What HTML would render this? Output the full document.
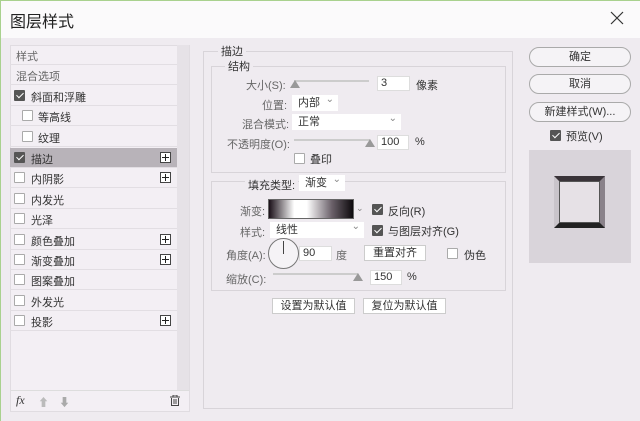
<!DOCTYPE html>
<html><head><meta charset="utf-8"><style>
*{box-sizing:border-box;margin:0;padding:0}
body{width:640px;height:421px;background:#efebf0;font-family:"Liberation Sans","Noto Sans CJK SC",sans-serif;font-size:11px;color:#333;position:relative;overflow:hidden}
.a{position:absolute}
.t{position:absolute;white-space:nowrap;font-size:11px;color:#333}
.g{color:#666}
.cb{position:absolute;width:11px;height:11px;border:1px solid #aaa;background:#fff;border-radius:1px}
.cb.on{background:#555;border-color:#555}
.cb.on:after{content:"";position:absolute;left:3px;top:0px;width:3px;height:6px;border:solid #fff;border-width:0 1.5px 1.5px 0;transform:rotate(45deg)}
.row{position:absolute;left:10px;width:167px;height:20px;border-bottom:1px solid #e2dee3}
.row span{position:absolute;top:3px}
.plus{position:absolute;left:150px;top:4px;width:11px;height:11px;border:1px solid #444;background:#fff}
.plus:before{content:"";position:absolute;left:1px;top:4px;width:7px;height:1px;background:#222}
.plus:after{content:"";position:absolute;left:4px;top:1px;width:1px;height:7px;background:#222}
.inp{position:absolute;background:#fff;border:1px solid #ddd;height:15px;padding-left:3px;line-height:13px}
.sel{position:absolute;background:#fff;height:16px;padding-left:6px;line-height:16px}
.sel:after{content:"⌄";position:absolute;right:4px;top:-3px;color:#888;font-size:10px}
.btn{position:absolute;background:#fff;border:1px solid #ccc;height:16px;text-align:center;line-height:14px}
.rb{position:absolute;left:529px;width:102px;height:20px;border:1px solid #aaa;border-radius:10px;background:#f5f3f6;text-align:center;line-height:18px}
.sl{position:absolute;height:2px;background:#ccc}
.tri{position:absolute;width:0;height:0;border-left:5px solid transparent;border-right:5px solid transparent;border-bottom:8px solid #999}
.box{position:absolute;border:1px solid #d8d4d9}
</style></head><body>
<div class="a" style="left:0;top:0;width:640px;height:38px;background:#fbfafb"></div>
<div class="a" style="left:0;top:0;width:1px;height:421px;background:#a9d18e"></div>
<div class="a" style="left:0;top:0;width:640px;height:1px;background:#a9d18e"></div>
<div class="t" style="left:10px;top:8px;font-size:16px;color:#222">图层样式</div>
<svg class="a" style="left:610px;top:11px" width="14" height="14"><path d="M1 1L13 13M13 1L1 13" stroke="#333" stroke-width="1.2"/></svg>

<div class="a" style="left:10px;top:45px;width:180px;height:367px;background:#f3eff4;border:1px solid #e0dce1"></div>
<div class="a" style="left:177px;top:45px;width:12px;height:345px;background:#e6e2e7"></div>
<div class="row" style="top:45px"><span style="left:6px" class="g">样式</span></div>
<div class="row" style="top:65px"><span style="left:6px" class="g">混合选项</span></div>
<div class="row" style="top:86px"><div class="cb on" style="left:4px;top:4px"></div><span style="left:21px">斜面和浮雕</span></div>
<div class="row" style="top:106px"><div class="cb" style="left:12px;top:4px"></div><span style="left:28px">等高线</span></div>
<div class="row" style="top:127px"><div class="cb" style="left:12px;top:4px"></div><span style="left:28px">纹理</span></div>
<div class="row" style="top:148px;background:#b8b3b9"><div class="cb on" style="left:4px;top:4px"></div><span style="left:21px">描边</span><div class="plus"></div></div>
<div class="row" style="top:168px"><div class="cb" style="left:4px;top:4px"></div><span style="left:21px">内阴影</span><div class="plus"></div></div>
<div class="row" style="top:189px"><div class="cb" style="left:4px;top:4px"></div><span style="left:21px">内发光</span></div>
<div class="row" style="top:209px"><div class="cb" style="left:4px;top:4px"></div><span style="left:21px">光泽</span></div>
<div class="row" style="top:230px"><div class="cb" style="left:4px;top:4px"></div><span style="left:21px">颜色叠加</span><div class="plus"></div></div>
<div class="row" style="top:250px"><div class="cb" style="left:4px;top:4px"></div><span style="left:21px">渐变叠加</span><div class="plus"></div></div>
<div class="row" style="top:270px"><div class="cb" style="left:4px;top:4px"></div><span style="left:21px">图案叠加</span></div>
<div class="row" style="top:291px"><div class="cb" style="left:4px;top:4px"></div><span style="left:21px">外发光</span></div>
<div class="row" style="top:311px"><div class="cb" style="left:4px;top:4px"></div><span style="left:21px">投影</span><div class="plus"></div></div>
<div class="a" style="left:11px;top:390px;width:178px;height:1px;background:#ddd"></div>
<div class="t" style="left:16px;top:393px;font-style:italic;font-family:'Liberation Serif',serif;font-size:12px">fx</div>
<div class="t" style="left:38px;top:394px;color:#bbb">⬆</div>
<div class="t" style="left:59px;top:394px;color:#aaa">⬇</div>
<svg class="a" style="left:170px;top:395px" width="10" height="11"><path d="M0 2H10M3 2V0H7V2M1.5 3V10.5H8.5V3M4 4V9M6 4V9" stroke="#444" fill="none"/></svg>

<div class="box" style="left:203px;top:51px;width:310px;height:358px"></div>
<div class="t" style="left:218px;top:43px;background:#efebf0;padding:0 3px">描边</div>
<div class="box" style="left:211px;top:66px;width:295px;height:107px"></div>
<div class="t" style="left:225px;top:58px;background:#efebf0;padding:0 3px">结构</div>
<div class="t g" style="left:246px;top:77px">大小(S):</div>
<div class="sl" style="left:294px;top:80px;width:75px"></div><div class="tri" style="left:290px;top:80px"></div>
<div class="inp" style="left:377px;top:76px;width:33px">3</div>
<div class="t" style="left:416px;top:77px">像素</div>
<div class="t g" style="left:262px;top:97px">位置:</div>
<div class="sel" style="left:292px;top:95px;width:46px">内部</div>
<div class="t g" style="left:242px;top:116px">混合模式:</div>
<div class="sel" style="left:292px;top:114px;width:109px">正常</div>
<div class="t g" style="left:227px;top:136px">不透明度(O):</div>
<div class="sl" style="left:294px;top:139px;width:76px"></div><div class="tri" style="left:365px;top:139px"></div>
<div class="inp" style="left:377px;top:135px;width:32px">100</div>
<div class="t" style="left:415px;top:136px">%</div>
<div class="cb" style="left:294px;top:153px"></div>
<div class="t" style="left:310px;top:151px">叠印</div>

<div class="box" style="left:211px;top:181px;width:295px;height:110px"></div>
<div class="t" style="left:245px;top:177px;background:#efebf0;padding:0 3px">填充类型:</div>
<div class="sel" style="left:299px;top:175px;width:46px">渐变</div>
<div class="t g" style="left:240px;top:203px">渐变:</div>
<div class="a" style="left:268px;top:199px;width:86px;height:20px;border:1px solid #666;background:linear-gradient(90deg,#1a1018,#fff 30%,#fff 45%,#6a6069 75%,#0d0a0d)"></div>
<div class="t" style="left:356px;top:203px;color:#888;font-size:9px">⌄</div>
<div class="cb on" style="left:372px;top:204px"></div>
<div class="t" style="left:388px;top:203px">反向(R)</div>
<div class="t g" style="left:240px;top:224px">样式:</div>
<div class="sel" style="left:270px;top:222px;width:94px">线性</div>
<div class="cb on" style="left:372px;top:225px"></div>
<div class="t" style="left:388px;top:223px">与图层对齐(G)</div>
<div class="t g" style="left:226px;top:247px">角度(A):</div>
<div class="a" style="left:268px;top:238px;width:31px;height:31px;border:1px solid #777;border-radius:50%;background:#f5f3f6"></div>
<div class="a" style="left:283px;top:241px;width:1px;height:13px;background:#444"></div>
<div class="inp" style="left:299px;top:246px;width:33px">90</div>
<div class="t g" style="left:336px;top:247px">度</div>
<div class="btn" style="left:364px;top:245px;width:62px">重置对齐</div>
<div class="cb" style="left:447px;top:248px"></div>
<div class="t" style="left:464px;top:247px">伪色</div>
<div class="t g" style="left:226px;top:271px">缩放(C):</div>
<div class="sl" style="left:273px;top:273px;width:85px"></div><div class="tri" style="left:353px;top:273px"></div>
<div class="inp" style="left:370px;top:270px;width:32px">150</div>
<div class="t" style="left:407px;top:271px">%</div>
<div class="btn" style="left:272px;top:298px;width:83px">设置为默认值</div>
<div class="btn" style="left:363px;top:298px;width:83px">复位为默认值</div>

<div class="rb" style="top:47px">确定</div>
<div class="rb" style="top:74px">取消</div>
<div class="rb" style="top:102px">新建样式(W)...</div>
<div class="cb on" style="left:550px;top:130px"></div>
<div class="t" style="left:566px;top:128px">预览(V)</div>
<div class="a" style="left:529px;top:150px;width:102px;height:113px;background:#d9d4da"></div>
<div class="a" style="left:554px;top:176px;width:51px;height:52px;border:5px solid;border-color:#3a3439 #8a828a #222 #c9c4ca;background:#e6e1e6;box-shadow:inset 0 0 0 1px #555"></div>
</body></html>
